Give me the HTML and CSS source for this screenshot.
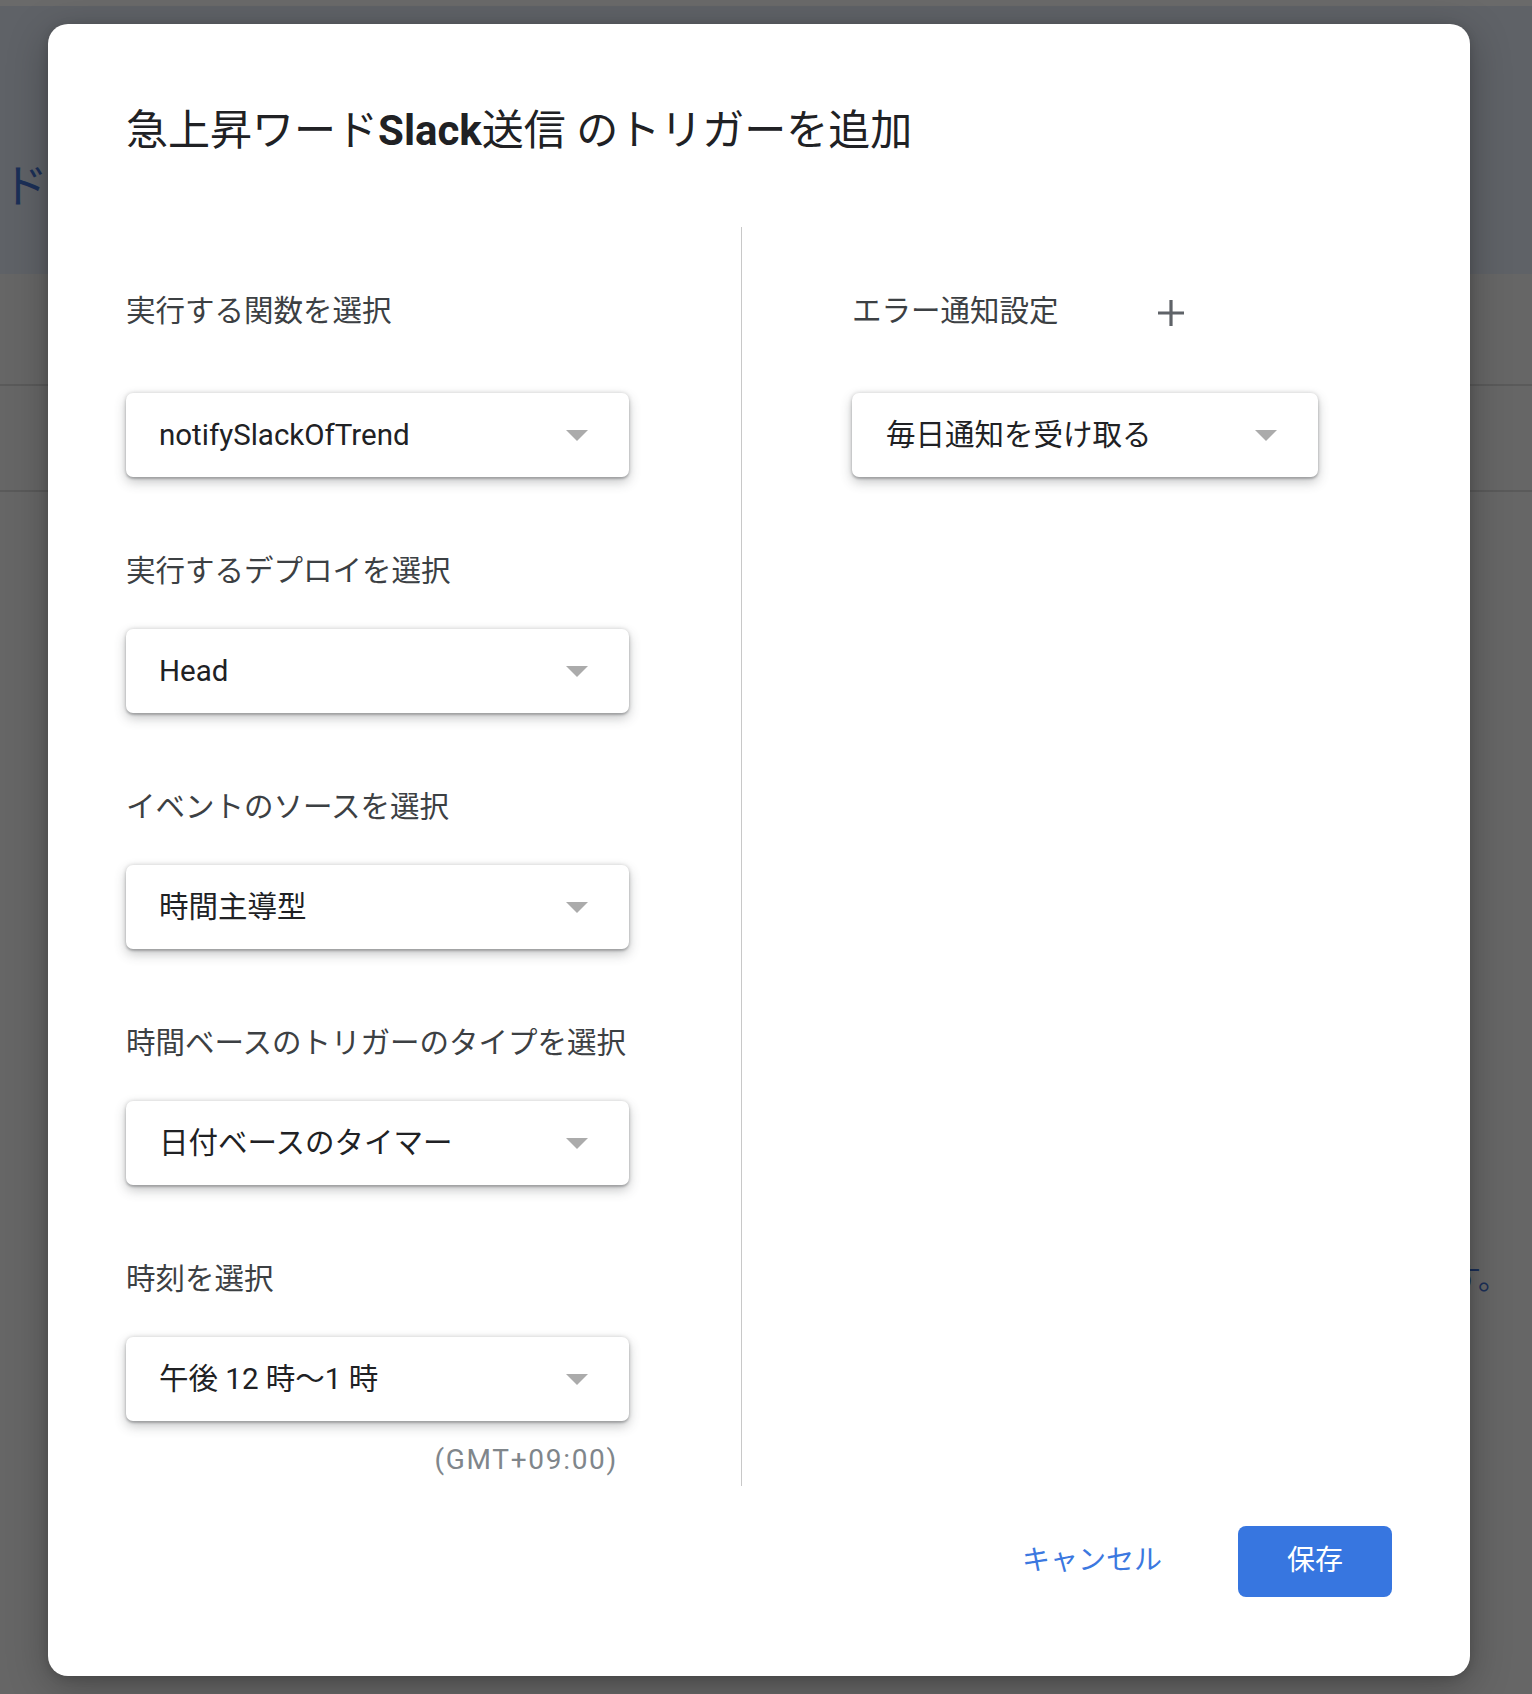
FILE: index.html
```html
<!DOCTYPE html>
<html lang="ja">
<head>
<meta charset="utf-8">
<title>トリガーを追加</title>
<link rel="stylesheet" href="styles.css">
</head>
<body>
<div class="page">
  <div class="page-top"></div>
  <header class="page-header"><span class="page-title">ドSlack送信</span></header>
  <div class="page-row"></div>
  <div class="page-row page-row-2"></div>
  <div class="page-body"><p class="page-note">ます。</p></div>
</div>

<div class="dialog" role="dialog">
  <h1 class="dialog-title">急上昇ワード<span class="latin-bold">Slack</span>送信 のトリガーを追加</h1>
  <div class="dialog-body">
    <div class="col col-left">
      <div class="field field-first">
        <div class="field-label">実行する関数を選択</div>
        <div class="select"><span class="select-value">notifySlackOfTrend</span><span class="caret"></span></div>
      </div>
      <div class="field">
        <div class="field-label">実行するデプロイを選択</div>
        <div class="select"><span class="select-value">Head</span><span class="caret"></span></div>
      </div>
      <div class="field">
        <div class="field-label">イベントのソースを選択</div>
        <div class="select"><span class="select-value">時間主導型</span><span class="caret"></span></div>
      </div>
      <div class="field">
        <div class="field-label">時間ベースのトリガーのタイプを選択</div>
        <div class="select"><span class="select-value">日付ベースのタイマー</span><span class="caret"></span></div>
      </div>
      <div class="field">
        <div class="field-label">時刻を選択</div>
        <div class="select"><span class="select-value">午後 12 時〜1 時</span><span class="caret"></span></div>
      </div>
      <div class="tz">(GMT+09:00)</div>
    </div>
    <div class="divider"></div>
    <div class="col col-right">
      <div class="field-head">
        <div class="field-label">エラー通知設定</div>
        <svg class="plus" width="28" height="28" viewBox="0 0 28 28" aria-hidden="true"><path d="M14 1v26M1 14h26" stroke="#5f6368" stroke-width="3.2" fill="none"/></svg>
      </div>
      <div class="select select-narrow"><span class="select-value">毎日通知を受け取る</span><span class="caret"></span></div>
    </div>
  </div>
  <div class="dialog-footer">
    <button class="btn-text" type="button">キャンセル</button>
    <button class="btn-primary" type="button">保存</button>
  </div>
</div>
</body>
</html>
```

FILE: styles.css
```css
html, body {
  margin: 0;
  padding: 0;
  height: 100%;
  overflow: hidden;
}

body {
  font-family: Roboto, "Noto Sans CJK JP", sans-serif;
  background: #666666;
  position: relative;
}

/* underlying page (dimmed by overlay) */
.page {
  height: 1694px;
  background: #666666;
}

.page-top {
  height: 6px;
  background: #6a6a6a;
}

.page-header {
  height: 268px;
  box-sizing: border-box;
  padding: 152px 0 0 2px;
  background: #5f6267;
}

.page-title {
  font-size: 46px;
  line-height: 56px;
  color: #1b2f57;
}

.page-row {
  height: 110px;
  border-bottom: 2px solid #5a5a5a;
}

.page-row-2 {
  height: 104px;
}

.page-body {
  padding-top: 766px;
}

.page-note {
  margin: 0;
  padding-right: 24px;
  text-align: right;
  font-size: 30px;
  line-height: 42px;
  color: #1b2f57;
}

/* dialog */
.dialog {
  position: absolute;
  top: 24px;
  left: 48px;
  width: 1422px;
  height: 1652px;
  box-sizing: border-box;
  padding: 82px 78px 79px;
  background: #ffffff;
  border-radius: 20px;
  box-shadow: 0 10px 40px rgba(0, 0, 0, 0.28), 0 2px 10px rgba(0, 0, 0, 0.15);
}

.dialog-title {
  margin: 0;
  height: 48px;
  font-size: 42px;
  line-height: 50px;
  font-weight: 400;
  color: #202124;
  white-space: nowrap;
}

.latin-bold {
  font-weight: 700;
}

.dialog-body {
  display: flex;
  margin-top: 73px;
  height: 1259px;
}

.col {
  box-sizing: border-box;
  padding-top: 64px;
}

.col-left {
  width: 615px;
}

.col-right {
  padding-left: 110px;
}

.divider {
  width: 1px;
  background: #c8c8c8;
  align-self: stretch;
}

.field + .field {
  margin-top: 74px;
}

.field-label {
  font-size: 29.5px;
  line-height: 40px;
  color: #3c4043;
  white-space: nowrap;
  margin-bottom: 38px;
}

.field-first .field-label {
  margin-bottom: 62px;
}

.field-head {
  display: flex;
  align-items: center;
  margin-bottom: 62px;
}

.field-head .field-label {
  margin-bottom: 0;
}

.plus {
  margin-left: 98px;
  margin-top: 4px;
  display: block;
}

.select {
  width: 503px;
  height: 84px;
  box-sizing: border-box;
  padding: 0 41px 0 33px;
  display: flex;
  align-items: center;
  justify-content: space-between;
  background: #ffffff;
  border-radius: 7px;
  box-shadow: 0 0 4px rgba(0, 0, 0, 0.16), 0 2px 2px rgba(60, 64, 67, 0.25), 0 5px 12px rgba(60, 64, 67, 0.3);
}

.select-narrow {
  width: 466px;
  padding-left: 34px;
}

.select-value {
  font-size: 29.5px;
  line-height: 40px;
  color: #202124;
  white-space: nowrap;
}

.caret {
  width: 0;
  height: 0;
  border-left: 11.5px solid transparent;
  border-right: 11.5px solid transparent;
  border-top: 11px solid #ababab;
  margin-top: 1px;
}

.tz {
  width: 492px;
  margin-top: 21px;
  text-align: right;
  font-size: 28px;
  line-height: 36px;
  letter-spacing: 1.7px;
  color: #80868b;
}

.dialog-footer {
  display: flex;
  justify-content: flex-end;
  align-items: center;
  margin-top: 40px;
  height: 71px;
}

.btn-text {
  height: 71px;
  padding: 0 20px 7px;
  margin-right: 56px;
  border: none;
  background: none;
  font-family: Roboto, "Noto Sans CJK JP", sans-serif;
  font-size: 28px;
  color: #3b78e0;
}

.btn-primary {
  width: 154px;
  height: 71px;
  padding: 0 0 7px;
  border: none;
  border-radius: 8px;
  background: #3776e0;
  color: #ffffff;
  font-family: Roboto, "Noto Sans CJK JP", sans-serif;
  font-size: 28px;
}
```
